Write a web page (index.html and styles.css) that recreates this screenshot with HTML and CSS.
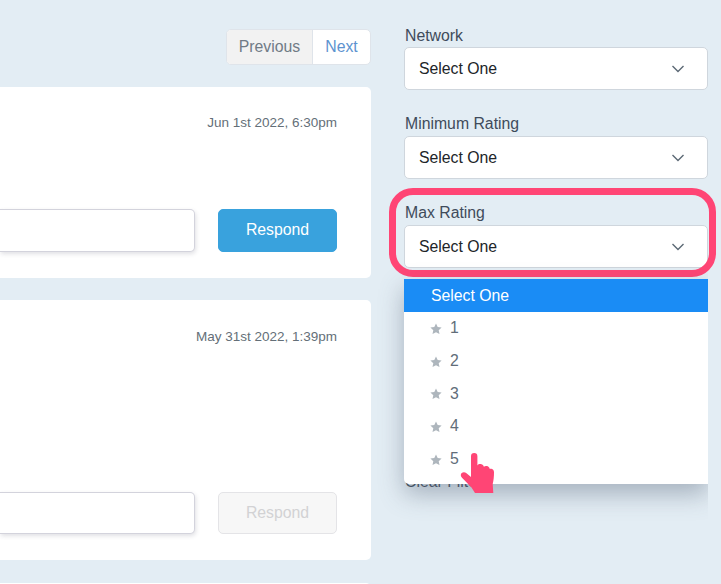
FILE: index.html
```html
<!DOCTYPE html>
<html lang="en">
<head>
<meta charset="utf-8">
<title>Reviews</title>
<link rel="stylesheet" href="styles.css">
</head>
<body>
<div class="page">
  <main class="main">
    <div class="pager-row">
      <div class="pager">
        <span class="pager-btn pager-prev">Previous</span>
        <span class="pager-btn pager-next">Next</span>
      </div>
    </div>
    <section class="card card-first">
      <div class="card-date">Jun 1st 2022, 6:30pm</div>
      <div class="reply-row">
        <div class="reply-input"></div>
        <button class="respond">Respond</button>
      </div>
    </section>
    <section class="card card-second">
      <div class="card-date">May 31st 2022, 1:39pm</div>
      <div class="reply-row">
        <div class="reply-input"></div>
        <button class="respond respond-off">Respond</button>
      </div>
    </section>
    <section class="card card-third"></section>
  </main>
  <aside class="side">
    <div class="filter filter-top">
      <div class="filter-label">Network</div>
      <div class="select"><span>Select One</span><svg class="chev" width="14" height="8" viewBox="0 0 14 8"><path d="M1.5 1 7 6.500 12.500 1" fill="none" stroke="#5c6975" stroke-width="1.4"/></svg></div>
    </div>
    <div class="filter">
      <div class="filter-label">Minimum Rating</div>
      <div class="select"><span>Select One</span><svg class="chev" width="14" height="8" viewBox="0 0 14 8"><path d="M1.5 1 7 6.500 12.500 1" fill="none" stroke="#5c6975" stroke-width="1.4"/></svg></div>
    </div>
    <div class="filter filter-open">
      <div class="filter-label">Max Rating</div>
      <div class="select"><span>Select One</span><svg class="chev" width="14" height="8" viewBox="0 0 14 8"><path d="M1.5 1 7 6.500 12.500 1" fill="none" stroke="#5c6975" stroke-width="1.4"/></svg></div>
      <div class="highlight"></div>
      <div class="menu">
        <div class="menu-head">Select One</div>
        <div class="menu-item"><svg class="star" width="12" height="12" viewBox="0 0 24 24"><path d="M12 1l3.400 7.200 7.800.9-5.800 5.300 1.600 7.700L12 18.300l-7 3.800 1.600-7.700L.8 9.100l7.800-.9z"/></svg>1</div>
        <div class="menu-item"><svg class="star" width="12" height="12" viewBox="0 0 24 24"><path d="M12 1l3.400 7.200 7.800.9-5.800 5.300 1.600 7.700L12 18.300l-7 3.800 1.600-7.700L.8 9.100l7.800-.9z"/></svg>2</div>
        <div class="menu-item"><svg class="star" width="12" height="12" viewBox="0 0 24 24"><path d="M12 1l3.400 7.200 7.800.9-5.800 5.300 1.600 7.700L12 18.300l-7 3.800 1.600-7.700L.8 9.100l7.800-.9z"/></svg>3</div>
        <div class="menu-item"><svg class="star" width="12" height="12" viewBox="0 0 24 24"><path d="M12 1l3.400 7.200 7.800.9-5.800 5.300 1.600 7.700L12 18.300l-7 3.800 1.600-7.700L.8 9.100l7.800-.9z"/></svg>4</div>
        <div class="menu-item"><svg class="star" width="12" height="12" viewBox="0 0 24 24"><path d="M12 1l3.400 7.200 7.800.9-5.800 5.300 1.600 7.700L12 18.300l-7 3.800 1.600-7.700L.8 9.100l7.800-.9z"/></svg>5</div>
      </div>
      <svg class="hand" width="38" height="40" viewBox="0 0 37 40"><path d="M10.500 3.200a3.200 3.200 0 0 1 6.400 0v9.300c.7-1 1.800-1.500 3-1.400 1.700.1 2.900 1 3.500 2.600.8-.6 1.800-.8 2.900-.6 1.500.3 2.500 1.300 3 2.900.7-.3 1.500-.3 2.200 0 1.400.6 2 1.800 2 3.400 0 4-.4 8-1.300 11.600L32.800 40H14.500l-3.500-5.500-9.500-9.700c-1.500-1.500-1.600-3.400-.3-4.700 1.300-1.300 3.200-1.200 4.800.1l4.500 3.800z" fill="#ff4575"/></svg>
    </div>
    <div class="clear">Clear Filter</div>
  </aside>
</div>
</body>
</html>
```

FILE: styles.css
```css
* { box-sizing: border-box; }
html, body { margin: 0; height: 100%; }
body {
  background: #e3edf4;
  font-family: "Liberation Sans", Arial, sans-serif;
  font-size: 15.8px;
  color: #3f4b5b;
  overflow: hidden;
}
.page {
  display: flex;
  width: 721px;
  height: 584px;
  overflow: hidden;
}
.main {
  width: 371px;
  flex: none;
  padding-top: 29px;
}
.pager-row {
  display: flex;
  justify-content: flex-end;
  margin-bottom: 22px;
}
.pager {
  display: flex;
  height: 36px;
  border: 1px solid #dfe4ea;
  border-radius: 5px;
  overflow: hidden;
  background: #fff;
}
.pager-btn {
  display: flex;
  align-items: center;
  justify-content: center;
  height: 100%;
}
.pager-prev {
  width: 86px;
  background: #f2f2f2;
  color: #707b86;
  border-right: 1px solid #dfe4ea;
}
.pager-next {
  width: 57px;
  color: #5d93cf;
}
.card {
  position: relative;
  background: #fff;
  border-radius: 0 5px 5px 0;
  margin-bottom: 22px;
  padding: 28px 34px 0 0;
}
.card-first { height: 191px; }
.card-second { height: 260px; margin-bottom: 23px; padding-top: 29px; }
.card-third { height: 40px; }
.card-date {
  text-align: right;
  font-size: 13.5px;
  line-height: 16px;
  color: #646f78;
}
.reply-row {
  display: flex;
  justify-content: space-between;
  height: 43px;
}
.card-first .reply-row { margin-top: 78px; }
.card-second .reply-row { margin-top: 147px; height: 42px; }
.reply-input {
  width: 195px;
  border: 1px solid #d3d3dc;
  border-left: 0;
  border-radius: 0 5px 5px 0;
  background: #fff;
  box-shadow: 1px 2px 4px rgba(60, 60, 90, 0.16);
}
.respond {
  width: 119px;
  height: 100%;
  border: 1px solid #39a2dd;
  border-radius: 5px;
  background: #39a2dd;
  color: #fff;
  font: inherit;
  padding: 0 0 2px;
}
.respond-off {
  background: #f7f7f7;
  border-color: #e4e4e7;
  color: #d2d2d4;
  padding: 0;
}
.side {
  width: 304px;
  flex: none;
  margin-left: 33px;
  padding-top: 26px;
}
.filter {
  position: relative;
  height: 89px;
}
.filter-label {
  line-height: 18px;
  color: #3f4b5b;
  margin-left: 1px;
  margin-bottom: 3px;
}
.filter-top .filter-label {
  padding-top: 1px;
  line-height: 17px;
  height: 18px;
}
.select {
  display: flex;
  align-items: center;
  justify-content: space-between;
  height: 43px;
  padding: 0 22px 0 14px;
  background: #fff;
  border: 1px solid #cfd6dd;
  border-radius: 5px;
  color: #212529;
}
.highlight {
  position: absolute;
  left: -15px;
  top: -16px;
  width: 327px;
  height: 89px;
  border: 7px solid #ff4575;
  border-radius: 24px;
  pointer-events: none;
}
.menu {
  position: absolute;
  left: 0;
  top: 75px;
  width: 304px;
  height: 205px;
  background: #fff;
  border-radius: 0 0 0 5px;
  box-shadow: 0 10px 24px rgba(90, 105, 125, 0.45);
  clip-path: inset(-40px 0 -40px -40px);
  z-index: 2;
}
.menu-head {
  height: 33px;
  line-height: 33px;
  padding-left: 27px;
  background: #1a8cf5;
  color: #fff;
}
.menu-item {
  display: flex;
  align-items: center;
  height: 32.7px;
  padding-left: 26px;
  color: #616d79;
}
.star {
  fill: #aeb6bd;
  margin-right: 8px;
  margin-top: 1px;
}
.hand {
  position: absolute;
  left: 56px;
  top: 249px;
  z-index: 3;
}
.clear {
  margin-top: 180px;
  margin-left: 1px;
  line-height: 18px;
  color: #3f4b5b;
}
```
